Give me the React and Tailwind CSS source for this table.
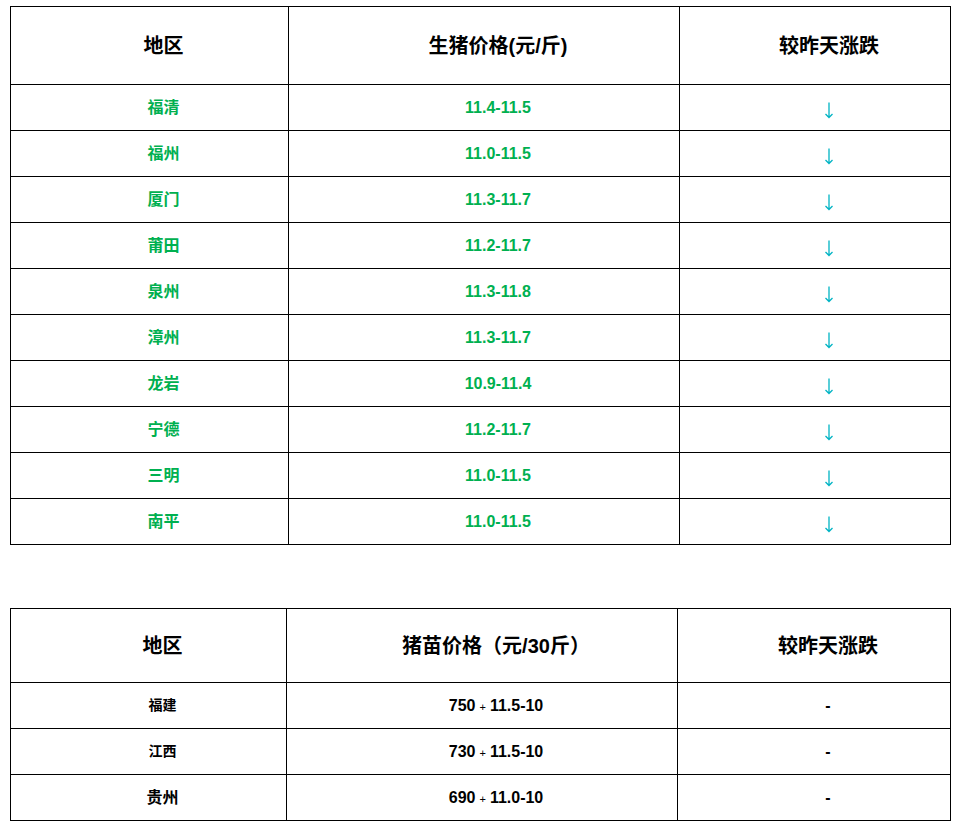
import React from "react";

const pigRows = [
  ["福清", "11.4-11.5"],
  ["福州", "11.0-11.5"],
  ["厦门", "11.3-11.7"],
  ["莆田", "11.2-11.7"],
  ["泉州", "11.3-11.8"],
  ["漳州", "11.3-11.7"],
  ["龙岩", "10.9-11.4"],
  ["宁德", "11.2-11.7"],
  ["三明", "11.0-11.5"],
  ["南平", "11.0-11.5"],
];

const pigletRows = [
  { area: "福建", base: "750", range: "11.5-10", small: true },
  { area: "江西", base: "730", range: "11.5-10", small: true },
  { area: "贵州", base: "690", range: "11.0-10", small: false },
];

const font = { fontFamily: '"Liberation Sans", "Noto Sans CJK SC", sans-serif' };

const HeadCell = ({ children, w, h }) => (
  <th className={`border border-black ${h} ${w} pl-[28px] text-center align-middle text-[20px] font-bold text-black`}>
    {children}
  </th>
);

const DownArrow = () => (
  <svg width="12" height="17" viewBox="0 0 12 17" className="inline-block mt-[6px]">
    <path d="M6 0.5V15.5M2.5 12L6 15.5L9.5 12" fill="none" stroke="#00b4c4" strokeWidth="1.3" />
  </svg>
);

const App = () => {
  return (
    <div className="bg-white w-[957px] min-h-[825px] pt-[6px] px-[10px]" style={font}>
      <table className="border-collapse w-[940px] table-fixed">
        <thead>
          <tr>
            <HeadCell w="w-[278px]" h="h-[78px]">地区</HeadCell>
            <HeadCell w="w-[391px]" h="h-[78px]">生猪价格(元/斤)</HeadCell>
            <HeadCell w="w-[271px]" h="h-[78px]">较昨天涨跌</HeadCell>
          </tr>
        </thead>
        <tbody>
          {pigRows.map(([area, price]) => (
            <tr key={area} className="h-[46px]">
              <td className="border border-black pl-[28px] text-center align-middle text-[16px] font-bold text-[#00b050]">
                {area}
              </td>
              <td className="border border-black pl-[28px] text-center align-middle text-[16px] font-bold text-[#00b050]">
                {price}
              </td>
              <td className="border border-black pl-[28px] text-center align-middle leading-none">
                <DownArrow />
              </td>
            </tr>
          ))}
        </tbody>
      </table>

      <table className="border-collapse w-[940px] table-fixed mt-[63px]">
        <thead>
          <tr>
            <HeadCell w="w-[276px]" h="h-[74px]">地区</HeadCell>
            <HeadCell w="w-[391px]" h="h-[74px]">猪苗价格（元/30斤）</HeadCell>
            <HeadCell w="w-[273px]" h="h-[74px]">较昨天涨跌</HeadCell>
          </tr>
        </thead>
        <tbody>
          {pigletRows.map((r) => (
            <tr key={r.area} className="h-[46px]">
              <td
                className={`border border-black pl-[28px] text-center align-middle font-bold text-black ${
                  r.small ? "text-[14px]" : "text-[16px]"
                }`}
              >
                {r.area}
              </td>
              <td className="border border-black pl-[28px] text-center align-middle text-[16px] font-bold text-black">
                {r.base}
                <span className="text-[11px] font-normal mx-[4px]">+</span>
                {r.range}
              </td>
              <td className="border border-black pl-[28px] text-center align-middle text-[16px] font-bold text-black">
                -
              </td>
            </tr>
          ))}
        </tbody>
      </table>
    </div>
  );
};

export default App;
